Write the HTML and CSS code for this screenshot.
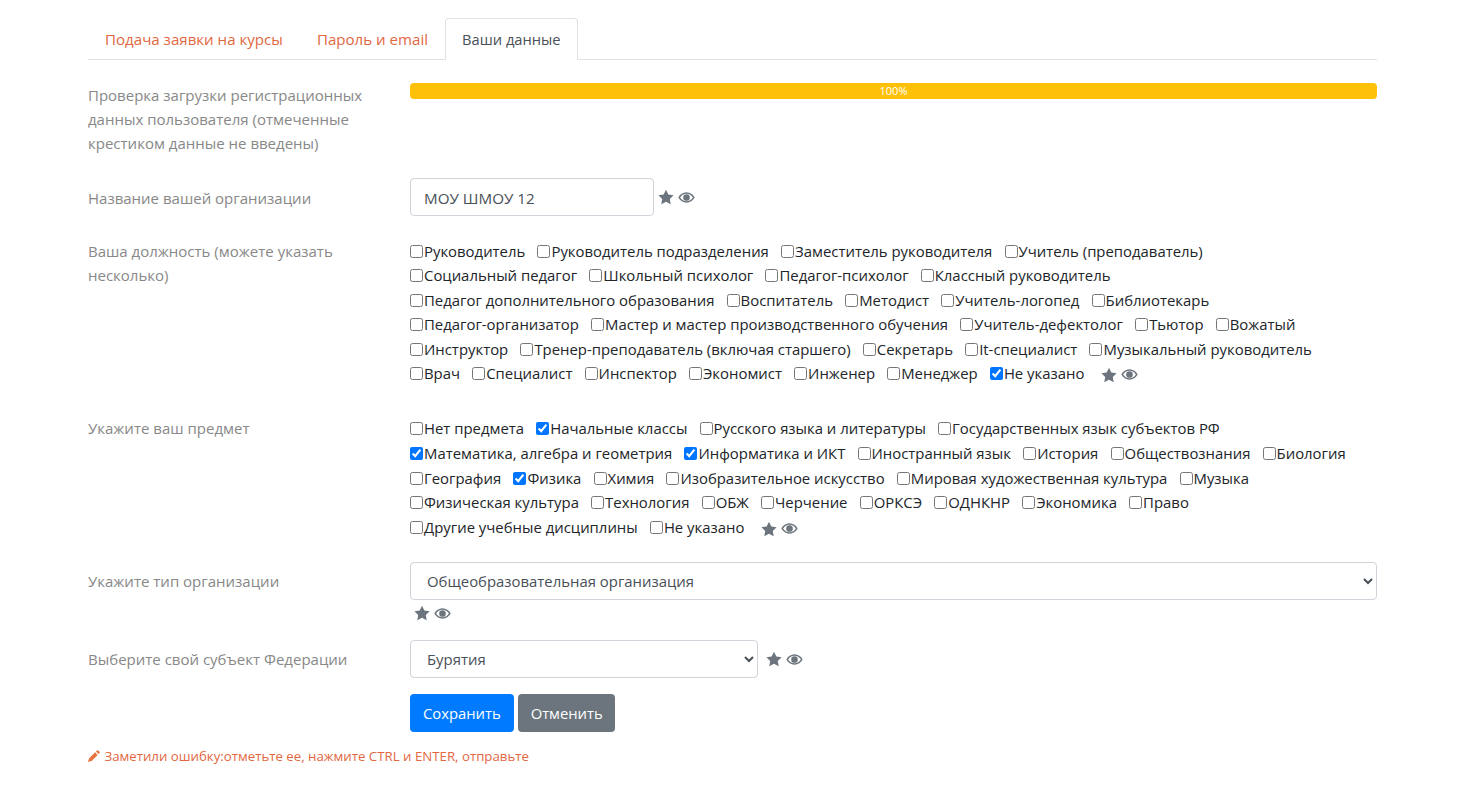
FILE: index.html
```html
<!DOCTYPE html>
<html lang="ru">
<head>
    <meta charset="UTF-8">
    <meta name="viewport" content="width=device-width, initial-scale=1.0">
    <title>Ваши данные</title>
    <link rel="stylesheet" href="styles.css">
</head>
<body>
    <svg class="defs" width="0" height="0">
        <symbol id="star" viewBox="0 0 24 24"><path d="M12 1l3.500 7.200 7.900 1.100-5.700 5.600 1.400 7.900-7.100-3.700-7.100 3.700 1.400-7.900L.6 9.300l7.900-1.100z"/></symbol>
        <symbol id="eye" viewBox="0 0 28 24"><path fill-rule="evenodd" d="M14 3.500C8.200 3.500 3.200 7 .5 12c2.700 5 7.700 8.500 13.500 8.500S24.800 17 27.500 12C24.800 7 19.800 3.500 14 3.500zm0 2.200c4.400 0 8.300 2.400 10.500 6.300-2.200 3.900-6.100 6.300-10.500 6.300S5.700 15.900 3.500 12C5.700 8.100 9.600 5.700 14 5.700zM14 6.500a5.500 5.500 0 1 0 0 11 5.500 5.500 0 0 0 0-11z"/></symbol>
    </svg>

    <div class="container">
        <ul class="tabs">
            <li><a href="#">Подача заявки на курсы</a></li>
            <li><a href="#">Пароль и email</a></li>
            <li class="active"><a href="#">Ваши данные</a></li>
        </ul>

        <form>
            <div class="row row-progress">
                <div class="row-label">Проверка загрузки регистрационных данных пользователя (отмеченные крестиком данные не введены)</div>
                <div class="row-body">
                    <div class="progress"><div class="progress-bar">100%</div></div>
                </div>
            </div>

            <div class="row row-org">
                <div class="row-label">Название вашей организации</div>
                <div class="row-body inline">
                    <input type="text" class="control org-input" value="МОУ ШМОУ 12">
                    <span class="marks"><svg class="star"><use href="#star"/></svg><svg class="eye"><use href="#eye"/></svg></span>
                </div>
            </div>

            <div class="row row-posts">
                <div class="row-label">Ваша должность (можете указать несколько)</div>
                <div class="row-body checks">
                    <div class="line">
                        <label><input type="checkbox">Руководитель</label>
                        <label><input type="checkbox">Руководитель подразделения</label>
                        <label><input type="checkbox">Заместитель руководителя</label>
                        <label><input type="checkbox">Учитель (преподаватель)</label>
                    </div>
                    <div class="line">
                        <label><input type="checkbox">Социальный педагог</label>
                        <label><input type="checkbox">Школьный психолог</label>
                        <label><input type="checkbox">Педагог-психолог</label>
                        <label><input type="checkbox">Классный руководитель</label>
                    </div>
                    <div class="line">
                        <label><input type="checkbox">Педагог дополнительного образования</label>
                        <label><input type="checkbox">Воспитатель</label>
                        <label><input type="checkbox">Методист</label>
                        <label><input type="checkbox">Учитель-логопед</label>
                        <label><input type="checkbox">Библиотекарь</label>
                    </div>
                    <div class="line">
                        <label><input type="checkbox">Педагог-организатор</label>
                        <label><input type="checkbox">Мастер и мастер производственного обучения</label>
                        <label><input type="checkbox">Учитель-дефектолог</label>
                        <label><input type="checkbox">Тьютор</label>
                        <label><input type="checkbox">Вожатый</label>
                    </div>
                    <div class="line">
                        <label><input type="checkbox">Инструктор</label>
                        <label><input type="checkbox">Тренер-преподаватель (включая старшего)</label>
                        <label><input type="checkbox">Секретарь</label>
                        <label><input type="checkbox">It-специалист</label>
                        <label><input type="checkbox">Музыкальный руководитель</label>
                    </div>
                    <div class="line">
                        <label><input type="checkbox">Врач</label>
                        <label><input type="checkbox">Специалист</label>
                        <label><input type="checkbox">Инспектор</label>
                        <label><input type="checkbox">Экономист</label>
                        <label><input type="checkbox">Инженер</label>
                        <label><input type="checkbox">Менеджер</label>
                        <label><input type="checkbox" checked>Не указано</label>
                        <span class="marks"><svg class="star"><use href="#star"/></svg><svg class="eye"><use href="#eye"/></svg></span>
                    </div>
                </div>
            </div>

            <div class="row row-subjects">
                <div class="row-label">Укажите ваш предмет</div>
                <div class="row-body checks">
                    <div class="line">
                        <label><input type="checkbox">Нет предмета</label>
                        <label><input type="checkbox" checked>Начальные классы</label>
                        <label><input type="checkbox">Русского языка и литературы</label>
                        <label><input type="checkbox">Государственных язык субъектов РФ</label>
                    </div>
                    <div class="line">
                        <label><input type="checkbox" checked>Математика, алгебра и геометрия</label>
                        <label><input type="checkbox" checked>Информатика и ИКТ</label>
                        <label><input type="checkbox">Иностранный язык</label>
                        <label><input type="checkbox">История</label>
                        <label><input type="checkbox">Обществознания</label>
                        <label><input type="checkbox">Биология</label>
                    </div>
                    <div class="line">
                        <label><input type="checkbox">География</label>
                        <label><input type="checkbox" checked>Физика</label>
                        <label><input type="checkbox">Химия</label>
                        <label><input type="checkbox">Изобразительное искусство</label>
                        <label><input type="checkbox">Мировая художественная культура</label>
                        <label><input type="checkbox">Музыка</label>
                    </div>
                    <div class="line">
                        <label><input type="checkbox">Физическая культура</label>
                        <label><input type="checkbox">Технология</label>
                        <label><input type="checkbox">ОБЖ</label>
                        <label><input type="checkbox">Черчение</label>
                        <label><input type="checkbox">ОРКСЭ</label>
                        <label><input type="checkbox">ОДНКНР</label>
                        <label><input type="checkbox">Экономика</label>
                        <label><input type="checkbox">Право</label>
                    </div>
                    <div class="line">
                        <label><input type="checkbox">Другие учебные дисциплины</label>
                        <label><input type="checkbox">Не указано</label>
                        <span class="marks"><svg class="star"><use href="#star"/></svg><svg class="eye"><use href="#eye"/></svg></span>
                    </div>
                </div>
            </div>

            <div class="row row-type">
                <div class="row-label">Укажите тип организации</div>
                <div class="row-body">
                    <select class="control type-select">
                        <option>Общеобразовательная организация</option>
                    </select>
                    <div class="marks marks-below"><svg class="star"><use href="#star"/></svg><svg class="eye"><use href="#eye"/></svg></div>
                </div>
            </div>

            <div class="row row-region">
                <div class="row-label">Выберите свой субъект Федерации</div>
                <div class="row-body inline">
                    <select class="control region-select">
                        <option>Бурятия</option>
                    </select>
                    <span class="marks marks-region"><svg class="star"><use href="#star"/></svg><svg class="eye"><use href="#eye"/></svg></span>
                </div>
            </div>

            <div class="row row-buttons">
                <div class="row-label"></div>
                <div class="row-body">
                    <button type="button" class="btn btn-save">Сохранить</button>
                    <button type="button" class="btn btn-cancel">Отменить</button>
                </div>
            </div>
        </form>

        <p class="report">
            <svg class="pencil" viewBox="0 0 16 16"><path d="M12 .6a1.200 1.200 0 0 1 1.700 0l1.700 1.700a1.200 1.200 0 0 1 0 1.700L14 5.400 10.600 2zM9.500 3.100l3.400 3.400-8 8-4.900 1.500 1.500-4.900z"/></svg>
            Заметили ошибку:отметьте ее, нажмите CTRL и ENTER, отправьте
        </p>
    </div>
</body>
</html>
```

FILE: styles.css
```css
* {
    box-sizing: border-box;
}
body {
    margin: 0;
    font-family: "Open Sans", "Noto Sans", sans-serif;
    font-size: 15px;
    line-height: 24px;
    color: #212529;
    background-color: #fff;
}
.defs {
    position: absolute;
}
.container {
    width: 1289px;
    margin-left: 88px;
    padding-top: 18px;
}
.tabs {
    display: flex;
    margin: 0 0 23px;
    padding: 0;
    list-style: none;
    border-bottom: 1px solid #dee2e6;
    height: 42px;
}
.tabs li {
    height: 42px;
    border: 1px solid transparent;
    border-radius: 4px 4px 0 0;
}
.tabs a {
    display: block;
    padding: 8px 16px;
    font-size: 15.100px;
    color: #e2673f;
    text-decoration: none;
}
.tabs .active {
    border-color: #dee2e6 #dee2e6 #fff;
    background-color: #fff;
}
.tabs .active a {
    font-size: 14.700px;
    color: #495057;
}
.row {
    display: flex;
}
.row-label {
    flex: 0 0 322px;
    padding-right: 30px;
    color: #888;
}
.row-body {
    flex: 1;
}
.inline {
    display: flex;
    align-items: center;
}
.row-progress {
    margin-bottom: 23px;
}
.progress {
    height: 16px;
    border-radius: 4px;
    overflow: hidden;
    background-color: #e9ecef;
}
.progress-bar {
    height: 16px;
    background-color: #ffc107;
    color: #fff;
    font-size: 11px;
    line-height: 16px;
    text-align: center;
}
.row-org {
    margin-bottom: 23px;
}
.row-org .row-label {
    padding-top: 8px;
}
.row-type .row-label,
.row-region .row-label {
    padding-top: 7px;
}
.control {
    height: 38px;
    padding: 6px 12px;
    font-family: inherit;
    font-size: 14.900px;
    color: #495057;
    background-color: #fff;
    border: 1px solid #ced4da;
    border-radius: 4px;
}
.org-input {
    width: 244px;
    padding: 7px 12px 5px 13px;
    font-size: 15.200px;
}
.type-select {
    display: block;
    width: 100%;
}
.region-select {
    width: 348px;
}
.marks {
    display: inline-flex;
    align-items: center;
    gap: 4px;
    margin-left: 4px;
    vertical-align: middle;
}
.marks-below {
    display: flex;
    height: 24px;
    margin-top: 1px;
}
.marks-region {
    margin-left: 8px;
}
.star {
    width: 16px;
    height: 16px;
    fill: #6c757d;
}
.eye {
    width: 17px;
    height: 15px;
    fill: #6c757d;
}
.row-posts {
    margin-bottom: 31px;
}
.row-subjects {
    margin-bottom: 23.100px;
}
.checks {
    font-size: 14.900px;
}
.line {
    height: 24.400px;
    white-space: nowrap;
}
.row-subjects .line {
    height: 24.600px;
}
.line label {
    margin-right: 8.300px;
}
.line input {
    width: 13px;
    height: 13px;
    margin: 0 1px 0 0;
    vertical-align: -1px;
}
.row-type {
    margin-bottom: 15px;
}
.row-region {
    margin-bottom: 16px;
}
.btn {
    height: 38px;
    padding: 6px 12px;
    font-family: inherit;
    font-size: 14.800px;
    color: #fff;
    border: 1px solid transparent;
    border-radius: 4px;
}
.btn-save {
    background-color: #007bff;
}
.btn-cancel {
    padding-right: 11px;
    background-color: #6c757d;
}
.report {
    margin: 12px 0 0;
    font-size: 13.250px;
    color: #e2673f;
}
.pencil {
    width: 12px;
    height: 12px;
    margin-right: 1px;
    fill: #e8743f;
    vertical-align: -1px;
}
```
